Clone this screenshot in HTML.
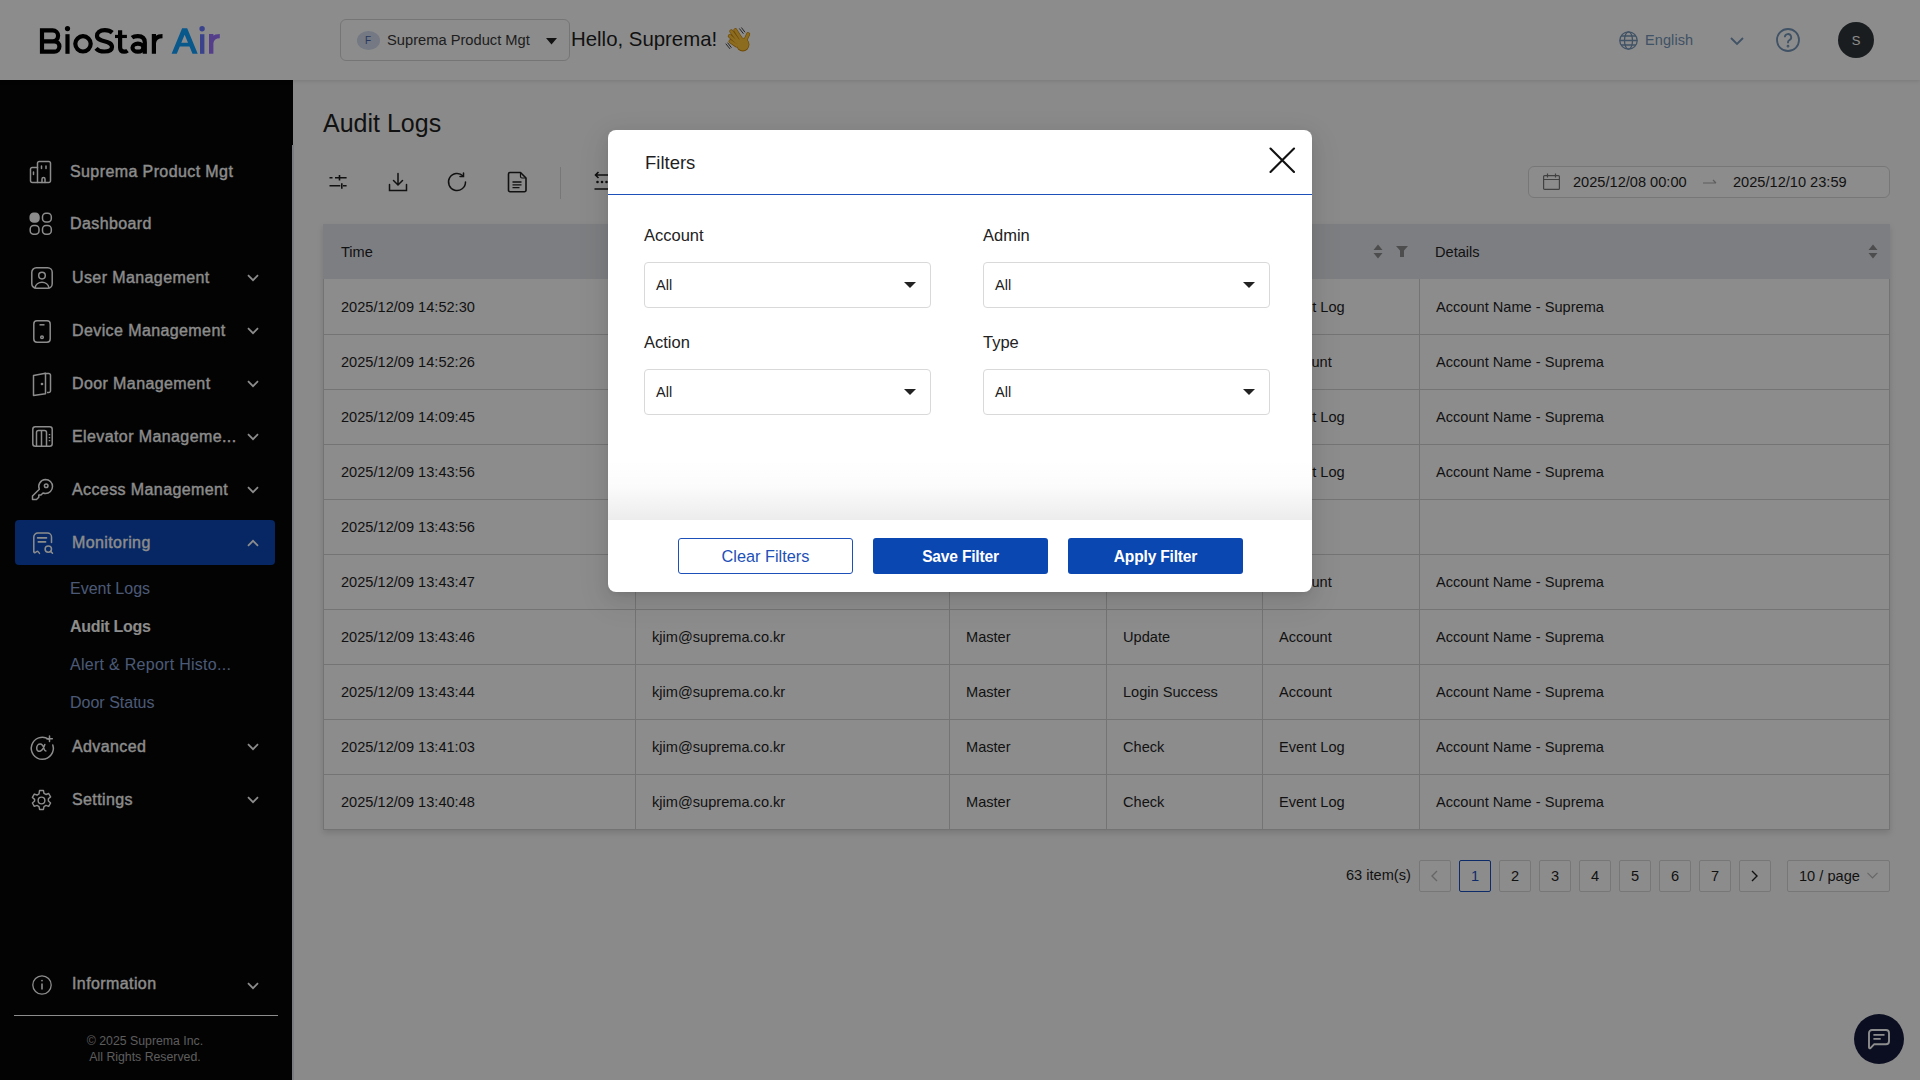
<!DOCTYPE html>
<html><head><meta charset="utf-8">
<style>
*{box-sizing:border-box;margin:0;padding:0}
html,body{width:1920px;height:1080px;overflow:hidden}
body{position:relative;font-family:"Liberation Sans",sans-serif;background:#fbfbfb;color:#1f1f1f}
.abs{position:absolute}
.t{position:absolute;white-space:nowrap;line-height:1}
svg{position:absolute;overflow:visible}
/* header */
#hdr{position:absolute;left:0;top:0;width:1920px;height:80px;background:#fff;box-shadow:0 1px 4px rgba(0,0,0,.12);z-index:2}
/* sidebar */
#side{position:absolute;left:0;top:80px;width:292px;height:1000px;background:#060606;z-index:1}
#side .mi{position:absolute;left:0;width:292px;height:46px}
#side .lbl{position:absolute;left:72px;top:50%;transform:translateY(-50%);font-size:16.3px;color:#fff;white-space:nowrap;letter-spacing:.1px}
#side .chev{position:absolute;left:247px;top:50%;margin-top:-4px}
#side .sub{position:absolute;left:70px;font-size:16px;color:#8aa3d8;white-space:nowrap;line-height:1}
/* main */
#main{position:absolute;left:292px;top:80px;width:1628px;height:1000px;background:#fbfbfb}
.cell{position:absolute;font-size:14.6px;color:#1f1f1f;white-space:nowrap;line-height:1}
/* mask */
#mask{position:absolute;left:0;top:0;width:1920px;height:1080px;background:rgba(0,0,0,.45);z-index:10}
/* modal */
#modal{position:absolute;left:608px;top:130px;width:704px;height:462px;background:#fff;border-radius:8px;z-index:11;overflow:hidden;box-shadow:0 6px 16px rgba(0,0,0,.08),0 3px 6px -4px rgba(0,0,0,.12),0 9px 28px 8px rgba(0,0,0,.05)}
.flbl{position:absolute;font-size:16.5px;color:#222;white-space:nowrap;line-height:1}
.sel{position:absolute;width:287px;height:46px;border:1px solid #d9d9d9;border-radius:4px;background:#fff}
.sel span{position:absolute;left:11px;top:15px;font-size:14.5px;color:#222;line-height:1}
.sel i{position:absolute;right:14px;top:19px;width:0;height:0;border-left:6px solid transparent;border-right:6px solid transparent;border-top:6px solid #222}
.btn{position:absolute;top:408px;width:175px;height:36px;border-radius:3px;font-size:16.3px;line-height:34px;text-align:center;white-space:nowrap}
</style></head><body>

<div id="hdr">
  <svg style="left:0;top:0" width="240" height="80" viewBox="0 0 240 80">
    <g fill="none" stroke="#000" stroke-width="4.2">
      <path d="M42 51.7V30.4H52.65A5.45 5.45 0 0 1 52.65 41.3H42M42 41.3H54.2A5.2 5.2 0 0 1 54.2 51.7H42Z" stroke-linejoin="miter"/>
      <path d="M67.5 34.2V53.8"/>
      <ellipse cx="83" cy="43.85" rx="7.7" ry="7.65"/>
      <path d="M112.3 32.6C110.5 31 108 30.2 104.8 30.2C99.5 30.2 97 32.8 97 35.8C97 43 112 39.5 112 47C112 50 109.3 51.5 104.3 51.5C100.5 51.5 97.7 50.2 96 48.3"/>
      <path d="M120.1 30.3V47.5C120.1 50.5 121.7 51.7 124.2 51.7C125.5 51.7 126.6 51.3 127.5 50.6"/>
      <path d="M115 36.45H126.9" stroke-width="3.2"/>
      <path d="M132 37.6C133.6 36.4 135.7 36.1 137.8 36.1C142.3 36.1 144.8 38.3 144.8 42.5V53.8"/>
      <ellipse cx="137.9" cy="47.7" rx="5.4" ry="4"/>
      <path d="M153.9 34V53.8M153.9 43C154.5 38.2 157.5 36.1 162.5 36.1"/>
    </g>
    <circle cx="67.5" cy="28.6" r="2.6" fill="#000"/>
    <path d="M171.6 53.8L182.1 28.25H187.2L197.7 53.8H192.5L189.5 46.5H179.8L176.8 53.8ZM181.3 42.8H188L184.65 34.7Z" fill="#10a0ff" fill-rule="evenodd"/>
    <path d="M202.2 34.2V53.8" fill="none" stroke="#6a78ff" stroke-width="4.4"/><path d="M211.2 34V53.8M211.2 43C211.8 38.2 214.8 36.1 219.8 36.1" fill="none" stroke="#9a72ff" stroke-width="4.4"/>
    <circle cx="202.1" cy="28.8" r="2.7" fill="#6a78ff"/>
  </svg>
  <div class="abs" style="left:340px;top:19px;width:230px;height:42px;border:1px solid #d6d6d6;border-radius:6px"></div>
  <div class="abs" style="left:357px;top:31px;width:23px;height:19px;border-radius:50%;background:#d3dcee"></div>
  <div class="t" style="left:365px;top:36px;font-size:10px;color:#4766a8">F</div>
  <div class="t" style="left:387px;top:33px;font-size:14.7px;color:#383838">Suprema Product Mgt</div>
  <svg style="left:546px;top:38px" width="11" height="7" viewBox="0 0 11 7"><path d="M0 0h11L5.5 6.5z" fill="#222"/></svg>
  <div class="t" style="left:571px;top:29px;font-size:20.4px;color:#1f1f1f">Hello, Suprema!</div>
  <svg style="left:720px;top:22px" width="36" height="34" viewBox="0 0 36 34">
    <g stroke="#c8860a" stroke-width="4" stroke-linecap="round" fill="none">
      <path d="M15.4 8.2L21 17M11.3 9.4L18 18.2M9.8 14L17 20.6M10.5 19.3L16.6 23.5M25.2 18.5L28.2 12.2"/>
    </g>
    <ellipse cx="22.8" cy="22.6" rx="6.6" ry="6.8" fill="#c8860a"/>
    <g stroke="#ffc53a" stroke-width="2.7" stroke-linecap="round" fill="none">
      <path d="M15.4 8.2L21 17M11.3 9.4L18 18.2M9.8 14L17 20.6M10.5 19.3L16.6 23.5M25.2 18.5L28.2 12.2"/>
    </g>
    <ellipse cx="22.8" cy="22.4" rx="5.9" ry="6.1" fill="#ffc53a"/>
    <path d="M19.6 6.8l3.6 4.6M21.6 5.8l3.2 4.2M6 22l3.8 4.6M7.8 21l3.4 4.4" stroke="#444" stroke-width="1" stroke-linecap="round"/>
  </svg>
  <svg style="left:1619px;top:31px" width="19" height="19" viewBox="0 0 19 19" fill="none" stroke="#7595b8" stroke-width="1.3">
    <circle cx="9.5" cy="9.5" r="8.7"/><ellipse cx="9.5" cy="9.5" rx="4" ry="8.7"/><path d="M.8 9.5h17.4M2 5h15M2 14h15"/>
  </svg>
  <div class="t" style="left:1645px;top:33px;font-size:14.5px;color:#7595b8;letter-spacing:.1px">English</div>
  <svg style="left:1730px;top:37px" width="14" height="8" viewBox="0 0 14 8" fill="none" stroke="#7595b8" stroke-width="1.8"><path d="M1 1l6 6 6-6"/></svg>
  <svg style="left:1776px;top:28px" width="24" height="24" viewBox="0 0 24 24" fill="none" stroke="#7595b8" stroke-width="1.8">
    <circle cx="12" cy="12" r="11"/><path d="M8.8 9.2a3.2 3.2 0 1 1 4.6 2.9c-.9.4-1.4 1.1-1.4 2v1.1"/><circle cx="12" cy="18.2" r=".5" fill="#7595b8"/>
  </svg>
  <div class="abs" style="left:1838px;top:22px;width:36px;height:36px;border-radius:50%;background:#30363a"></div>
  <div class="t" style="left:1838px;width:36px;text-align:center;top:34px;font-size:13px;color:#fff">S</div>
</div>

<div class="abs" style="left:292px;top:80px;width:1px;height:65px;background:#060606;z-index:3"></div>
<div class="abs" style="left:292px;top:145px;width:2px;height:935px;background:#dde3ea;z-index:3"></div>
<div id="side">
  <!-- Suprema Product Mgt -->
  <svg style="left:29px;top:80px" width="24" height="24" viewBox="0 0 24 24" fill="none" stroke="#fff" stroke-width="1.5" stroke-linecap="round" stroke-linejoin="round">
    <path d="M8.5 22.5H3.2A1.7 1.7 0 0 1 1.5 20.8V9.2A1.7 1.7 0 0 1 3.2 7.5H8.5"/>
    <path d="M8.5 22.5V3.2A1.7 1.7 0 0 1 10.2 1.5H19.8A1.7 1.7 0 0 1 21.5 3.2V20.8A1.7 1.7 0 0 1 19.8 22.5H8.5"/>
    <path d="M4.5 12v2.5M12.5 6v2.5M17 6v2.5M13 22.5v-3.5a1.5 1.5 0 0 1 3 0v3.5"/>
  </svg>
  <div class="t" style="left:70px;top:84px;font-size:16px;color:#fff;-webkit-text-stroke:.35px #fff;letter-spacing:.4px">Suprema Product Mgt</div>
  <!-- Dashboard -->
  <svg style="left:29px;top:132px" width="24" height="24" viewBox="0 0 24 24" fill="none" stroke="#fff" stroke-width="1.5">
    <rect x="1.2" y="1.2" width="8.8" height="8.8" rx="3.5" fill="#fff"/>
    <rect x="13.5" y="1.2" width="8.8" height="8.8" rx="3.5"/>
    <rect x="1.2" y="13.5" width="8.8" height="8.8" rx="3.5"/>
    <rect x="13.5" y="13.5" width="8.8" height="8.8" rx="3.5"/>
  </svg>
  <div class="t" style="left:70px;top:136px;font-size:16px;color:#fff;-webkit-text-stroke:.35px #fff;letter-spacing:.4px">Dashboard</div>

  <!-- User Management -->
  <svg style="left:31px;top:187px" width="22" height="22" viewBox="0 0 22 22" fill="none" stroke="#fff" stroke-width="1.5">
    <rect x=".8" y=".8" width="20.4" height="20.4" rx="4.5"/>
    <circle cx="11" cy="8.6" r="3.3"/>
    <path d="M4 20.8c.6-3.3 3.5-5.6 7-5.6s6.4 2.3 7 5.6"/>
  </svg>
  <div class="t" style="left:72px;top:190px;font-size:16px;color:#fff;-webkit-text-stroke:.35px #fff;letter-spacing:.4px">User Management</div>
  <svg class="chev" style="left:247px;top:198px" width="12" height="8" viewBox="0 0 12 8" fill="none" stroke="#fff" stroke-width="1.8"><path d="M1 1.2l5 5 5-5"/></svg>

  <!-- Device -->
  <svg style="left:33px;top:240px" width="18" height="23" viewBox="0 0 18 23" fill="none" stroke="#fff" stroke-width="1.5">
    <rect x=".8" y=".8" width="16.4" height="21.4" rx="3.2"/>
    <path d="M6.5 4.8h5"/><circle cx="9" cy="17.3" r="1.3"/>
  </svg>
  <div class="t" style="left:72px;top:243px;font-size:16px;color:#fff;-webkit-text-stroke:.35px #fff;letter-spacing:.4px">Device Management</div>
  <svg class="chev" style="left:247px;top:251px" width="12" height="8" viewBox="0 0 12 8" fill="none" stroke="#fff" stroke-width="1.8"><path d="M1 1.2l5 5 5-5"/></svg>

  <!-- Door -->
  <svg style="left:32px;top:292px" width="20" height="24" viewBox="0 0 20 24" fill="none" stroke="#fff" stroke-width="1.5" stroke-linejoin="round">
    <path d="M12.5 1.5h4.2A1.8 1.8 0 0 1 18.5 3.3v15.4A1.8 1.8 0 0 1 16.7 20.5H15"/>
    <path d="M1.5 3.5l12-2.3v20.5l-12 1.8z"/>
    <circle cx="10" cy="12" r=".6" fill="#fff"/>
  </svg>
  <div class="t" style="left:72px;top:296px;font-size:16px;color:#fff;-webkit-text-stroke:.35px #fff;letter-spacing:.4px">Door Management</div>
  <svg class="chev" style="left:247px;top:304px" width="12" height="8" viewBox="0 0 12 8" fill="none" stroke="#fff" stroke-width="1.8"><path d="M1 1.2l5 5 5-5"/></svg>

  <!-- Elevator -->
  <svg style="left:32px;top:346px" width="21" height="21" viewBox="0 0 21 21" fill="none" stroke="#fff" stroke-width="1.5">
    <rect x=".8" y=".8" width="19.4" height="19.4" rx="2.5"/>
    <path d="M4.5 20V6.5A2 2 0 0 1 6.5 4.5h6A2 2 0 0 1 14.5 6.5V20M9.5 4.5V20"/>
    <path d="M17.5 8v1.2M17.5 11v1.2M17.5 14v1.2"/>
  </svg>
  <div class="t" style="left:72px;top:349px;font-size:16px;color:#fff;-webkit-text-stroke:.35px #fff;letter-spacing:.4px">Elevator Manageme...</div>
  <svg class="chev" style="left:247px;top:357px" width="12" height="8" viewBox="0 0 12 8" fill="none" stroke="#fff" stroke-width="1.8"><path d="M1 1.2l5 5 5-5"/></svg>

  <!-- Access (key) -->
  <svg style="left:31px;top:398px" width="23" height="23" viewBox="0 0 23 23" fill="none" stroke="#fff" stroke-width="1.5" stroke-linejoin="round">
    <path d="M14.5 1.5a7 7 0 0 1 0 14c-.9 0-1.7-.2-2.5-.5l-2 2h-2.2v2.2l-2.3 2.3H1.5V18l6.8-6.8A7 7 0 0 1 14.5 1.5z"/>
    <circle cx="15.2" cy="7.8" r="1.8"/>
  </svg>
  <div class="t" style="left:72px;top:402px;font-size:16px;color:#fff;-webkit-text-stroke:.35px #fff;letter-spacing:.4px">Access Management</div>
  <svg class="chev" style="left:247px;top:410px" width="12" height="8" viewBox="0 0 12 8" fill="none" stroke="#fff" stroke-width="1.8"><path d="M1 1.2l5 5 5-5"/></svg>

  <!-- Monitoring active -->
  <div class="abs" style="left:15px;top:440px;width:260px;height:45px;background:#0b48b6;border-radius:4px"></div>
  <svg style="left:32px;top:450px" width="22" height="24" viewBox="0 0 22 24" fill="none" stroke="#fff" stroke-width="1.5" stroke-linecap="round"><path d="M1.8 21.5V7A4 4 0 0 1 5.8 3H15.5A4 4 0 0 1 19.5 7V12.5"/><path d="M1.8 21.5c0 1.3 1.2 1.6 2 .7c.8-1 1.8-1.1 2.5-.3l1.2 1.5"/><path d="M5.6 7.9h8.9M6.3 11.9h7.3" stroke-width="1.6"/><circle cx="16.3" cy="19.1" r="3.2"/><path d="M18.6 21.4l1.9 1.9"/></svg>
  <div class="t" style="left:72px;top:455px;font-size:16px;color:#fff;-webkit-text-stroke:.35px #fff;letter-spacing:.4px">Monitoring</div>
  <svg class="chev" style="left:247px;top:463px" width="12" height="8" viewBox="0 0 12 8" fill="none" stroke="#fff" stroke-width="1.8"><path d="M1 6.8l5-5 5 5"/></svg>

  <div class="sub" style="top:501px">Event Logs</div>
  <div class="sub" style="top:539px;color:#fff;font-weight:700;letter-spacing:-.3px">Audit Logs</div>
  <div class="sub" style="top:577px;letter-spacing:.28px">Alert &amp; Report Histo...</div>
  <div class="sub" style="top:615px">Door Status</div>

  <!-- Advanced -->
  <svg style="left:30px;top:655px" width="25" height="25" viewBox="0 0 25 25" fill="none" stroke="#fff" stroke-width="1.5" stroke-linecap="round">
    <path d="M18.5 4.2A11 11 0 1 0 22.8 10"/>
    <path d="M19.5 1v5.5M16.7 3.7h5.6"/>
    <path d="M14.8 9.5c-1 3.3-2.3 5.5-4.3 6.5s-3.8-.3-3.8-2.7 1.6-4.2 3.5-4.2 3 1.9 3.7 4.3c.3 1.1.9 2.5 2 2.5"/>
  </svg>
  <div class="t" style="left:72px;top:659px;font-size:16px;color:#fff;-webkit-text-stroke:.35px #fff;letter-spacing:.4px">Advanced</div>
  <svg class="chev" style="left:247px;top:667px" width="12" height="8" viewBox="0 0 12 8" fill="none" stroke="#fff" stroke-width="1.8"><path d="M1 1.2l5 5 5-5"/></svg>

  <!-- Settings gear -->
  <svg style="left:30px;top:709px" width="23" height="23" viewBox="0 0 24 24" fill="none" stroke="#fff" stroke-width="1.5" stroke-linejoin="round">
    <path d="M10 1.5h4l.6 3 2 1.2 2.9-1 2 3.5-2.3 2v2.4l2.3 2-2 3.5-2.9-1-2 1.2-.6 3h-4l-.6-3-2-1.2-2.9 1-2-3.5 2.3-2V10.8l-2.3-2 2-3.5 2.9 1 2-1.2z"/>
    <circle cx="12" cy="12" r="3.5"/>
  </svg>
  <div class="t" style="left:72px;top:712px;font-size:16px;color:#fff;-webkit-text-stroke:.35px #fff;letter-spacing:.4px">Settings</div>
  <svg class="chev" style="left:247px;top:720px" width="12" height="8" viewBox="0 0 12 8" fill="none" stroke="#fff" stroke-width="1.8"><path d="M1 1.2l5 5 5-5"/></svg>

  <!-- Information -->
  <svg style="left:32px;top:895px" width="20" height="20" viewBox="0 0 20 20" fill="none" stroke="#fff" stroke-width="1.3">
    <circle cx="10" cy="10" r="9.2"/><path d="M10 8.5v6" stroke-width="1.6"/><circle cx="10" cy="5.6" r=".9" fill="#fff" stroke="none"/>
  </svg>
  <div class="t" style="left:72px;top:896px;font-size:16px;color:#fff;-webkit-text-stroke:.35px #fff;letter-spacing:.4px">Information</div>
  <svg class="chev" style="left:247px;top:906px" width="12" height="8" viewBox="0 0 12 8" fill="none" stroke="#fff" stroke-width="1.8"><path d="M1 1.2l5 5 5-5"/></svg>

  <div class="abs" style="left:14px;top:935px;width:264px;height:1px;background:#fff"></div>
  <div class="t" style="left:0;width:290px;text-align:center;top:953px;font-size:12.3px;color:#a8a8a8;line-height:16px">© 2025 Suprema Inc.<br>All Rights Reserved.</div>
</div>

<div id="main">
<div class="t" style="left:31px;top:31px;font-size:25px;color:#1f1f1f">Audit Logs</div>
<svg style="left:-292px;top:-80px" width="1" height="1" viewBox="0 0 1 1" fill="none" stroke="#1f1f1f" stroke-width="1.6"><path d="M329.5 177.7h3M335 177.7h11.6M339.5 175v5.4M329.5 185.8h10.8M343 185.8h3.6M341.8 183.3v5.5"/></svg>
<svg style="left:96px;top:92px" width="20" height="20" viewBox="0 0 20 20" fill="none" stroke="#1f1f1f" stroke-width="1.5" stroke-linecap="round"><path d="M10 1.5v11M5.5 8.5L10 13l4.5-4.5M1.5 12.5v6h17v-6"/></svg>
<svg style="left:155px;top:92px" width="21" height="20" viewBox="0 0 21 20" fill="none" stroke="#1f1f1f" stroke-width="1.5" stroke-linecap="round"><path d="M18.5 10a8.5 8.5 0 1 1-2.4-5.9"/><path d="M16.5 1v3.5H13"/></svg>
<svg style="left:-292px;top:-80px" width="1" height="1" viewBox="0 0 1 1" fill="none" stroke="#1f1f1f" stroke-width="1.6" stroke-linejoin="round"><path d="M510 172.5h10.5l5.5 5.5v12.2a1.5 1.5 0 0 1-1.5 1.5H510a1.5 1.5 0 0 1-1.5-1.5V174a1.5 1.5 0 0 1 1.5-1.5z"/><path d="M520.5 172.5v4a1.5 1.5 0 0 0 1.5 1.5h4" stroke-width="1.2"/><path d="M512.5 182h9M512.5 184.8h9M512.5 187.6h7" stroke-width="1.3"/></svg>
<div class="abs" style="left:268px;top:87px;width:1px;height:32px;background:#d9d9d9"></div>
<svg style="left:-292px;top:-80px" width="1" height="1" viewBox="0 0 1 1" fill="none" stroke="#1f1f1f" stroke-width="1.6"><path d="M595.5 175h14M598.5 172l-3 3 3 3M594.5 189h15"/><circle cx="597.5" cy="182" r="1.3" fill="#1f1f1f" stroke="none"/><circle cx="602" cy="182" r="1.3" fill="#1f1f1f" stroke="none"/><circle cx="606.5" cy="182" r="1.3" fill="#1f1f1f" stroke="none"/></svg>
<div class="abs" style="left:1236px;top:86px;width:362px;height:32px;border:1px solid #d9d9d9;border-radius:6px;background:#fff"></div>
<svg style="left:1251px;top:93px" width="17" height="17" viewBox="0 0 17 17" fill="none" stroke="#777" stroke-width="1.2"><rect x=".6" y="2.6" width="15.8" height="13.8" rx="1"/><path d="M.6 6.5h15.8M4.5 .5v4M12.5 .5v4"/></svg>
<div class="t" style="left:1281px;top:95px;font-size:14.6px;color:#1f1f1f">2025/12/08 00:00</div>
<svg style="left:1411px;top:98px" width="14" height="8" viewBox="0 0 14 8" fill="none" stroke="#aaa" stroke-width="1.2"><path d="M0 5h13M10 2l3 3"/></svg>
<div class="t" style="left:1441px;top:95px;font-size:14.6px;color:#1f1f1f">2025/12/10 23:59</div>
<div class="abs" style="left:31px;top:144px;width:1567px;height:606px;background:#fff;border:1px solid #d2d2d2;border-top:0;box-shadow:0 3px 6px rgba(0,0,0,.13)"></div>
<div class="abs" style="left:31px;top:144px;width:1567px;height:55px;background:#e2e5eb"></div>
<div class="cell" style="left:49px;top:165px">Time</div>
<div class="cell" style="left:1143px;top:165px">Details</div>
<svg style="left:1081px;top:164px" width="10" height="15" viewBox="0 0 10 15"><path d="M5 0.5l4.5 5.5h-9z M5 14.5L.5 9h9z" fill="#8c8c8c"/></svg>
<svg style="left:1576px;top:164px" width="10" height="15" viewBox="0 0 10 15"><path d="M5 0.5l4.5 5.5h-9z M5 14.5L.5 9h9z" fill="#8c8c8c"/></svg>
<svg style="left:1104px;top:166px" width="12" height="11" viewBox="0 0 12 11"><path d="M0 0h12l-4 4.5V11H4V4.5z" fill="#8c8c8c"/></svg>
<div class="cell" style="left:49px;top:220px">2025/12/09 14:52:30</div>
<div class="cell" style="left:360px;top:220px">kjim@suprema.co.kr</div>
<div class="cell" style="left:674px;top:220px">Master</div>
<div class="cell" style="left:831px;top:220px">Check</div>
<div class="cell" style="left:987px;top:220px">Event Log</div>
<div class="cell" style="left:1144px;top:220px">Account Name - Suprema</div>
<div class="abs" style="left:31px;top:254px;width:1566px;height:1px;background:#d4d4d4"></div>
<div class="cell" style="left:49px;top:275px">2025/12/09 14:52:26</div>
<div class="cell" style="left:360px;top:275px">kjim@suprema.co.kr</div>
<div class="cell" style="left:674px;top:275px">Master</div>
<div class="cell" style="left:831px;top:275px">Update</div>
<div class="cell" style="left:987px;top:275px">Account</div>
<div class="cell" style="left:1144px;top:275px">Account Name - Suprema</div>
<div class="abs" style="left:31px;top:309px;width:1566px;height:1px;background:#d4d4d4"></div>
<div class="cell" style="left:49px;top:330px">2025/12/09 14:09:45</div>
<div class="cell" style="left:360px;top:330px">kjim@suprema.co.kr</div>
<div class="cell" style="left:674px;top:330px">Master</div>
<div class="cell" style="left:831px;top:330px">Check</div>
<div class="cell" style="left:987px;top:330px">Event Log</div>
<div class="cell" style="left:1144px;top:330px">Account Name - Suprema</div>
<div class="abs" style="left:31px;top:364px;width:1566px;height:1px;background:#d4d4d4"></div>
<div class="cell" style="left:49px;top:385px">2025/12/09 13:43:56</div>
<div class="cell" style="left:360px;top:385px">kjim@suprema.co.kr</div>
<div class="cell" style="left:674px;top:385px">Master</div>
<div class="cell" style="left:831px;top:385px">Check</div>
<div class="cell" style="left:987px;top:385px">Event Log</div>
<div class="cell" style="left:1144px;top:385px">Account Name - Suprema</div>
<div class="abs" style="left:31px;top:419px;width:1566px;height:1px;background:#d4d4d4"></div>
<div class="cell" style="left:49px;top:440px">2025/12/09 13:43:56</div>
<div class="cell" style="left:360px;top:440px">kjim@suprema.co.kr</div>
<div class="cell" style="left:674px;top:440px">Master</div>
<div class="cell" style="left:831px;top:440px">Delete</div>
<div class="cell" style="left:987px;top:440px">User</div>
<div class="abs" style="left:31px;top:474px;width:1566px;height:1px;background:#d4d4d4"></div>
<div class="cell" style="left:49px;top:495px">2025/12/09 13:43:47</div>
<div class="cell" style="left:360px;top:495px">kjim@suprema.co.kr</div>
<div class="cell" style="left:674px;top:495px">Master</div>
<div class="cell" style="left:831px;top:495px">Create</div>
<div class="cell" style="left:987px;top:495px">Account</div>
<div class="cell" style="left:1144px;top:495px">Account Name - Suprema</div>
<div class="abs" style="left:31px;top:529px;width:1566px;height:1px;background:#d4d4d4"></div>
<div class="cell" style="left:49px;top:550px">2025/12/09 13:43:46</div>
<div class="cell" style="left:360px;top:550px">kjim@suprema.co.kr</div>
<div class="cell" style="left:674px;top:550px">Master</div>
<div class="cell" style="left:831px;top:550px">Update</div>
<div class="cell" style="left:987px;top:550px">Account</div>
<div class="cell" style="left:1144px;top:550px">Account Name - Suprema</div>
<div class="abs" style="left:31px;top:584px;width:1566px;height:1px;background:#d4d4d4"></div>
<div class="cell" style="left:49px;top:605px">2025/12/09 13:43:44</div>
<div class="cell" style="left:360px;top:605px">kjim@suprema.co.kr</div>
<div class="cell" style="left:674px;top:605px">Master</div>
<div class="cell" style="left:831px;top:605px">Login Success</div>
<div class="cell" style="left:987px;top:605px">Account</div>
<div class="cell" style="left:1144px;top:605px">Account Name - Suprema</div>
<div class="abs" style="left:31px;top:639px;width:1566px;height:1px;background:#d4d4d4"></div>
<div class="cell" style="left:49px;top:660px">2025/12/09 13:41:03</div>
<div class="cell" style="left:360px;top:660px">kjim@suprema.co.kr</div>
<div class="cell" style="left:674px;top:660px">Master</div>
<div class="cell" style="left:831px;top:660px">Check</div>
<div class="cell" style="left:987px;top:660px">Event Log</div>
<div class="cell" style="left:1144px;top:660px">Account Name - Suprema</div>
<div class="abs" style="left:31px;top:694px;width:1566px;height:1px;background:#d4d4d4"></div>
<div class="cell" style="left:49px;top:715px">2025/12/09 13:40:48</div>
<div class="cell" style="left:360px;top:715px">kjim@suprema.co.kr</div>
<div class="cell" style="left:674px;top:715px">Master</div>
<div class="cell" style="left:831px;top:715px">Check</div>
<div class="cell" style="left:987px;top:715px">Event Log</div>
<div class="cell" style="left:1144px;top:715px">Account Name - Suprema</div>
<div class="abs" style="left:343px;top:199px;width:1px;height:550px;background:#d4d4d4"></div>
<div class="abs" style="left:657px;top:199px;width:1px;height:550px;background:#d4d4d4"></div>
<div class="abs" style="left:814px;top:199px;width:1px;height:550px;background:#d4d4d4"></div>
<div class="abs" style="left:970px;top:199px;width:1px;height:550px;background:#d4d4d4"></div>
<div class="abs" style="left:1127px;top:199px;width:1px;height:550px;background:#d4d4d4"></div>
<div class="t" style="left:1054px;top:788px;font-size:14.6px;color:#1f1f1f">63 item(s)</div>
<div class="abs" style="left:1127px;top:780px;width:32px;height:32px;border:1px solid #d9d9d9;border-radius:2px;background:#fff"></div>
<svg style="left:1137px;top:790px" width="11" height="12" viewBox="0 0 11 12" fill="none" stroke="#bbb" stroke-width="1.4"><path d="M8 1L3 6l5 5"/></svg>
<div class="abs" style="left:1167px;top:780px;width:32px;height:32px;border:1px solid #1a4fc0;border-radius:2px;background:#fff"></div>
<div class="t" style="left:1167px;width:32px;text-align:center;top:789px;font-size:14.6px;color:#1a4fc0">1</div>
<div class="abs" style="left:1207px;top:780px;width:32px;height:32px;border:1px solid #d9d9d9;border-radius:2px;background:#fff"></div>
<div class="t" style="left:1207px;width:32px;text-align:center;top:789px;font-size:14.6px;color:#1f1f1f">2</div>
<div class="abs" style="left:1247px;top:780px;width:32px;height:32px;border:1px solid #d9d9d9;border-radius:2px;background:#fff"></div>
<div class="t" style="left:1247px;width:32px;text-align:center;top:789px;font-size:14.6px;color:#1f1f1f">3</div>
<div class="abs" style="left:1287px;top:780px;width:32px;height:32px;border:1px solid #d9d9d9;border-radius:2px;background:#fff"></div>
<div class="t" style="left:1287px;width:32px;text-align:center;top:789px;font-size:14.6px;color:#1f1f1f">4</div>
<div class="abs" style="left:1327px;top:780px;width:32px;height:32px;border:1px solid #d9d9d9;border-radius:2px;background:#fff"></div>
<div class="t" style="left:1327px;width:32px;text-align:center;top:789px;font-size:14.6px;color:#1f1f1f">5</div>
<div class="abs" style="left:1367px;top:780px;width:32px;height:32px;border:1px solid #d9d9d9;border-radius:2px;background:#fff"></div>
<div class="t" style="left:1367px;width:32px;text-align:center;top:789px;font-size:14.6px;color:#1f1f1f">6</div>
<div class="abs" style="left:1407px;top:780px;width:32px;height:32px;border:1px solid #d9d9d9;border-radius:2px;background:#fff"></div>
<div class="t" style="left:1407px;width:32px;text-align:center;top:789px;font-size:14.6px;color:#1f1f1f">7</div>
<div class="abs" style="left:1447px;top:780px;width:32px;height:32px;border:1px solid #d9d9d9;border-radius:2px;background:#fff"></div>
<svg style="left:1457px;top:790px" width="11" height="12" viewBox="0 0 11 12" fill="none" stroke="#1f1f1f" stroke-width="1.4"><path d="M3 1l5 5-5 5"/></svg>
<div class="abs" style="left:1495px;top:780px;width:103px;height:32px;border:1px solid #d9d9d9;border-radius:2px;background:#fff"></div>
<div class="t" style="left:1507px;top:789px;font-size:14.6px;color:#1f1f1f">10 / page</div>
<svg style="left:1575px;top:792px" width="11" height="7" viewBox="0 0 11 7" fill="none" stroke="#bbb" stroke-width="1.2"><path d="M.5 .8l5 5 5-5"/></svg>
</div>
<div id="mask"></div>
<div id="modal">
  <div class="t" style="left:37px;top:24px;font-size:18.5px;color:#1f1f1f">Filters</div>
  <svg style="left:661px;top:17px" width="26" height="26" viewBox="0 0 26 26" fill="none" stroke="#111" stroke-width="2.1" stroke-linecap="round"><path d="M1.5 1.5l23.5 23.5M25 1.5L1.5 25"/></svg>
  <div class="abs" style="left:0;top:64px;width:704px;height:1px;background:#1d50b8"></div>
  <div class="flbl" style="left:36px;top:97px">Account</div>
  <div class="sel" style="left:36px;top:132px"><span>All</span><i></i></div>
  <div class="flbl" style="left:375px;top:97px">Admin</div>
  <div class="sel" style="left:375px;top:132px"><span>All</span><i></i></div>
  <div class="flbl" style="left:36px;top:204px">Action</div>
  <div class="sel" style="left:36px;top:239px"><span>All</span><i></i></div>
  <div class="flbl" style="left:375px;top:204px">Type</div>
  <div class="sel" style="left:375px;top:239px"><span>All</span><i></i></div>
  <div class="abs" style="left:0;top:330px;width:704px;height:60px;background:linear-gradient(180deg,rgba(0,0,0,0),rgba(0,0,0,.015) 45%,rgba(0,0,0,.075))"></div>
  <div class="btn" style="left:70px;border:1.5px solid #1d50b8;color:#1d50b8;background:#fff">Clear Filters</div>
  <div class="btn" style="left:265px;background:#0b47b1;color:#fff;font-weight:700;font-size:15.6px;letter-spacing:-.2px;line-height:38px">Save Filter</div>
  <div class="btn" style="left:460px;background:#0b47b1;color:#fff;font-weight:700;font-size:15.6px;letter-spacing:-.2px;line-height:38px">Apply Filter</div>
</div>
<div class="abs" style="left:1854px;top:1014px;width:50px;height:50px;border-radius:50%;background:#141b3c;z-index:5"></div>
<svg style="left:1868px;top:1028px;z-index:5" width="22" height="22" viewBox="0 0 22 22" fill="none" stroke="#fff" stroke-width="1.9" stroke-linejoin="round"><path d="M1 19.5V5a3 3 0 0 1 3-3h14a3 3 0 0 1 3 3v8.3a3 3 0 0 1-3 3H6l-3.5 3.8c-.5.5-1.5.3-1.5-.6z"/><path d="M5.4 6.9h11.1M5.4 10.9h7.3"/></svg>

</body></html>
